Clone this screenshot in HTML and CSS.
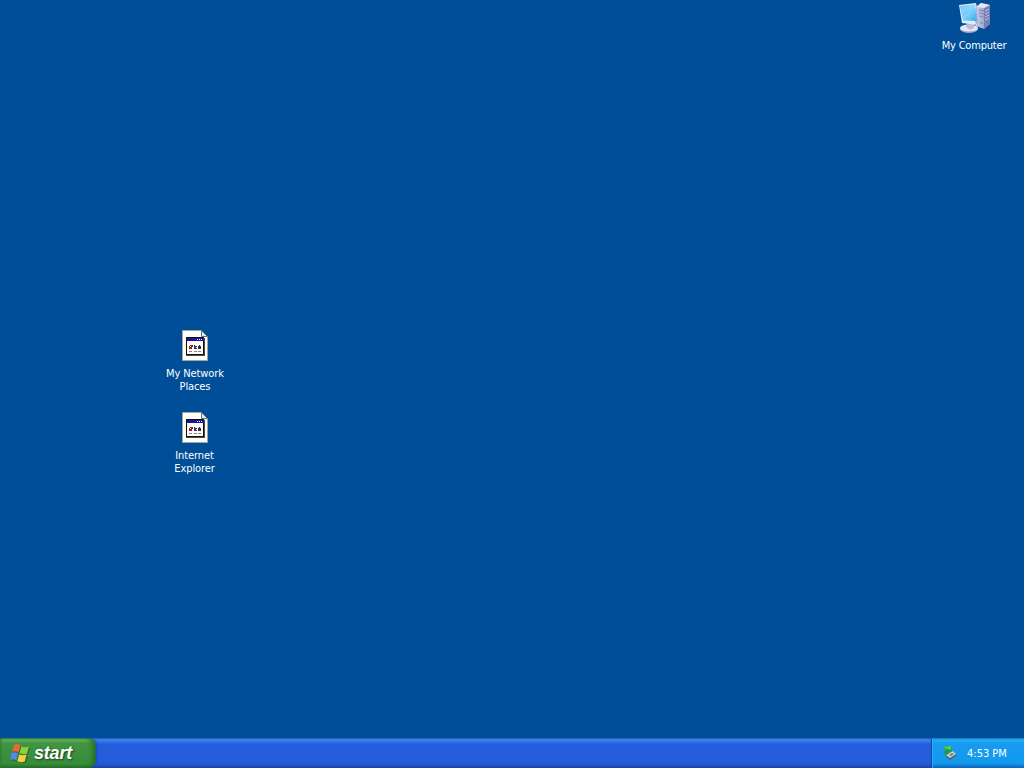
FILE: index.html
```
<!DOCTYPE html>
<html lang="en">
<head>
    <meta charset="UTF-8">
    <meta name="viewport" content="width=device-width, initial-scale=1.0">
    <title>Desktop</title>
    <link rel="stylesheet" href="styles.css">
</head>
<body>
    <svg width="0" height="0" class="defs">
        <defs>
            <linearGradient id="screen" x1="0" y1="0" x2="1" y2="1">
                <stop offset="0" stop-color="#48aff0"/>
                <stop offset="0.5" stop-color="#7dd2fb"/>
                <stop offset="1" stop-color="#3fa5ee"/>
            </linearGradient>
            <linearGradient id="tower" x1="0" y1="0" x2="1" y2="0">
                <stop offset="0" stop-color="#c9cdec"/>
                <stop offset="1" stop-color="#8288bd"/>
            </linearGradient>
            <symbol id="file" viewBox="0 0 32 32">
                <path d="M3.500 0.500H22.500L28.500 6.500V30.500H3.500Z" fill="#fefefa" stroke="#a5a59b"/>
                <path d="M22.500 0.500V6.500H28.500Z" fill="#dcebf0" stroke="#63707d"/>
                <path d="M7 8H26V26H7Z" fill="#4a4a50"/>
                <path d="M7 7H25V25H7Z" fill="#111"/>
                <path d="M8 8H25V11H8Z" fill="#1515a0"/>
                <path d="M18 9h1v1h-1zM20 9h1v1h-1zM22 9h1v1h-1z" fill="#fff"/>
                <path d="M8 11H24V24H8Z" fill="#fffaf8"/>
                <path d="M11 15h3v2h-1v2h-3v-3h1z" fill="#8b1e31"/>
                <path d="M11 16h1v1h-1z" fill="#fff"/>
                <path d="M15 15h1v1h2v1h-1v1h1v1h-3z" fill="#26338b"/>
                <path d="M20 15h1v1h1v3h-3v-3h1z" fill="#333"/>
                <path d="M10 21h3v1h-3zM15 21h3v1h-3zM19 21h3v1h-3z" fill="#888"/>
            </symbol>
        </defs>
    </svg>

    <div class="desktop">
        <div class="icon computer">
            <svg width="32" height="32" viewBox="-1 0 32 32">
                <path d="M17 5L22 1L31 3V22L25 27L17 24Z" fill="url(#tower)"/>
                <path d="M25 6L31 3V22L25 27Z" fill="#777eb6"/>
                <path d="M17 5L22 1L31 3L25 6Z" fill="#e4e5f7"/>
                <path d="M20 8l5 1M20 11l5 1M20 14l5 1" stroke="#8288b8" fill="none"/>
                <path d="M26 9l4-2M26 12l4-2M26 15l4-2M26 18l4-2" stroke="#bcc2e2" fill="none"/>
                <path d="M21 20h3v2h-3z" fill="#6cba80"/>
                <ellipse cx="10" cy="27" rx="9" ry="4" fill="#9b9fc9"/>
                <ellipse cx="10" cy="26" rx="9" ry="3.6" fill="#e6e6f5"/>
                <path d="M8 21L15 22V26L11 28L7 25Z" fill="#b8bbdc"/>
                <path d="M0 3L17 1L20 20L18 23L3 21Z" fill="#e2ebf8"/>
                <path d="M17 1L20 20L18 23L16 20Z" fill="#a9b4d8"/>
                <path d="M1 4L16 2.500L18 19L4 18.500Z" fill="url(#screen)"/>
                <path d="M1 4L16 2.500L16.500 6Q8 7 3 13Z" fill="#a9e3ff" opacity=".4"/>
            </svg>
            <span>My Computer</span>
        </div>
        <div class="icon network">
            <svg width="32" height="32"><use href="#file"/></svg>
            <span>My Network<br>Places</span>
        </div>
        <div class="icon explorer">
            <svg width="32" height="32"><use href="#file"/></svg>
            <span>Internet<br>Explorer</span>
        </div>
    </div>

    <div class="taskbar">
        <div class="start">
            <svg width="20" height="20" viewBox="0 0 20 20">
                <g class="flag-shadow">
                    <path d="M4 3Q7 1 11 3.500L9 11Q5.500 9 2 10Z"/>
                    <path d="M12 4.500Q15 6 20 4.500L18 12Q13.500 13.500 10.500 11Z"/>
                    <path d="M2 12Q5 10 9 12L7 19Q4 17 1 18Z"/>
                    <path d="M10 13Q13 14.500 18 13L16 20Q11.500 21 8.500 18.500Z"/>
                </g>
                <path d="M4 2Q7 0 10.500 2.500L8.500 9.500Q5.500 7.500 2 9Z" fill="#ee6536"/>
                <path d="M11.500 3.500Q14.500 5 19 3.500L17 10.500Q12.500 12 9.500 10Z" fill="#8bcf3c"/>
                <path d="M1.500 10Q5 8.500 8.200 10.500L6.200 17.500Q3.500 15.500 0 17Z" fill="#5289e8"/>
                <path d="M9.200 11.500Q12 13 16.500 11.500L14.800 18.500Q10.500 20 7.200 18Z" fill="#f7cf3c"/>
            </svg>
            <span>start</span>
        </div>
        <div class="tasks"></div>
        <div class="tray">
            <svg width="16" height="16" viewBox="0 0 16 16">
                <path d="M5 10L12 6L15 9V11L9 15L5 12Z" fill="#53616b"/>
                <path d="M5 10L12 6L15 9L9 13Z" fill="#c8d2d2"/>
                <path d="M8 10l3-2 2 1-3 2z" fill="#707e86"/>
                <path d="M2 2L10 1L11 7L9 6L6 10L2 8L5 5Z" fill="#209a38"/>
                <path d="M2 2L10 1L10 5L5 4Z" fill="#4ed152"/>
            </svg>
            <span>4:53 PM</span>
        </div>
    </div>
</body>
</html>
```
FILE: styles.css
```
body {
    font-family: "DejaVu Sans Condensed", "DejaVu Sans", sans-serif;
    font-size: 11px;
    color: #fff;
    margin: 0;
    height: 100vh;
    display: flex;
    flex-direction: column;
    overflow: hidden;
    background-color: #004e98;
}
.defs {
    position: absolute;
}
.desktop {
    flex: 1;
    position: relative;
}
.icon {
    position: absolute;
    width: 76px;
    display: flex;
    flex-direction: column;
    align-items: center;
    gap: 5px;
    line-height: 13px;
    text-align: center;
    letter-spacing: -0.1px;
}
.computer {
    left: 936px;
    top: 2px;
    letter-spacing: -0.2px;
}
.network {
    left: 157px;
    top: 330px;
}
.explorer {
    left: 157px;
    top: 412px;
}
.explorer span {
    margin-right: 1px;
}
.taskbar {
    height: 30px;
    display: flex;
    background: linear-gradient(#2454b4 0, #4286f0 2px, #2e6be6 4px, #245ddb 7px, #245ddb 22px, #2259d4 26px, #1941a5 30px);
}
.start {
    width: 96px;
    box-sizing: border-box;
    padding-left: 10px;
    display: flex;
    align-items: center;
    gap: 4px;
    border-radius: 0 8px 8px 0;
    background: linear-gradient(#2e7d36 0, #62b35f 2px, #409442 5px, #398e3b 20px, #388d39 26px, #256d29 30px);
    box-shadow: inset -5px 0 5px -2px #236b2a, inset 2px 0 2px -1px #327b37, 1px 0 2px #1c4bb4;
}
.start span {
    font: italic bold 18px "Liberation Sans", Arial, sans-serif;
    letter-spacing: -0.2px;
    text-shadow: 1px 1px 2px #173f1b;
}
.flag-shadow {
    fill: #1f5926;
    opacity: 0.6;
}
.tasks {
    flex: 1;
}
.tray {
    width: 93px;
    box-sizing: border-box;
    padding-left: 9px;
    display: flex;
    align-items: center;
    gap: 10px;
    border-left: 1px solid #0c4aa5;
    background: linear-gradient(#156ec0 0, #22b5f3 2px, #189af0 5px, #129bee 22px, #1396e9 26px, #095bb9 30px);
    box-shadow: inset 1px 0 1px #24b4f4;
}
```
